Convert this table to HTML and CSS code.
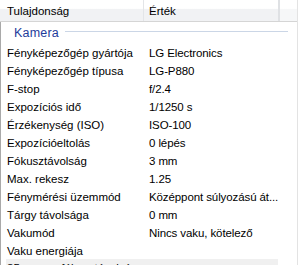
FILE: index.html
```html
<!DOCTYPE html>
<html lang="hu">
<head>
<meta charset="utf-8">
<link rel="stylesheet" href="styles.css">
</head>
<body>
<div class="panel">
  <div class="header">
    <div class="hcell hname">Tulajdonság</div>
    <div class="hcell hvalue">Érték</div>
    <div class="hcell hfill"></div>
  </div>
  <div class="body">
    <div class="group"><span class="group-title">Kamera</span><span class="group-line"></span></div>
    <div class="row"><span class="name">Fényképezőgép gyártója</span><span class="value">LG Electronics</span></div>
    <div class="row"><span class="name">Fényképezőgép típusa</span><span class="value">LG-P880</span></div>
    <div class="row"><span class="name">F-stop</span><span class="value">f/2.4</span></div>
    <div class="row"><span class="name">Expozíciós idő</span><span class="value">1/1250 s</span></div>
    <div class="row"><span class="name">Érzékenység (ISO)</span><span class="value">ISO-100</span></div>
    <div class="row"><span class="name">Expozícióeltolás</span><span class="value">0 lépés</span></div>
    <div class="row"><span class="name">Fókusztávolság</span><span class="value">3 mm</span></div>
    <div class="row"><span class="name">Max. rekesz</span><span class="value">1.25</span></div>
    <div class="row"><span class="name">Fénymérési üzemmód</span><span class="value">Középpont súlyozású át...</span></div>
    <div class="row"><span class="name">Tárgy távolsága</span><span class="value">0 mm</span></div>
    <div class="row"><span class="name">Vakumód</span><span class="value">Nincs vaku, kötelező</span></div>
    <div class="row"><span class="name">Vaku energiája</span><span class="value"></span></div>
    <div class="row hover"><span class="name">35 mm-es fókusztávolság</span><span class="value"></span></div>
  </div>
</div>
</body>
</html>
```
FILE: styles.css
```css
html, body {
  margin: 0;
  padding: 0;
  background: #ffffff;
  overflow: hidden;
}

.panel {
  width: 298px;
  height: 265px;
  font-family: "Liberation Sans", Arial, sans-serif;
  font-size: 11.5px;
  color: #000000;
  overflow: hidden;
  box-sizing: border-box;
  border-right: 1px solid #e3e3e3;
}

/* column header strip */
.header {
  display: flex;
  height: 21px;
  border-bottom: 1px solid #d5d5d5;
  background: linear-gradient(#ffffff, #ffffff 40%, #f1f2f4 45%, #f1f2f4);
}

.hcell {
  display: flex;
  align-items: center;
  box-sizing: border-box;
  white-space: nowrap;
}

.hname {
  width: 144px;
  padding-left: 7px;
  border-right: 1px solid #e3e5e8;
}

.hvalue {
  width: 136px;
  padding-left: 5px;
  border-right: 2px solid #dfe1e4;
}

.hfill {
  flex: 1;
  background: linear-gradient(#ffffff, #ffffff 40%, #f6f7f8 45%, #f6f7f8);
}

.body {
  border-left: 1px solid #a9a9a9;
  height: 243px;
}

/* group caption with a rule after it */
.group {
  display: flex;
  align-items: center;
  height: 21px;
  padding-left: 13px;
  width: 287px;
  box-sizing: border-box;
}

.group-title {
  color: #1e3c9b;
  font-size: 12.5px;
  letter-spacing: 0.2px;
}

.group-line {
  flex: 1;
  height: 1px;
  margin-left: 6px;
  margin-bottom: 2px;
  background: #cbd6e6;
}

.row {
  display: grid;
  grid-template-columns: 142px 1fr;
  height: 18px;
  align-items: center;
  width: 277px;
  box-sizing: border-box;
  white-space: nowrap;
}

.name {
  padding-left: 6px;
  padding-top: 1px;
  overflow: hidden;
}

.value {
  padding-left: 6px;
  padding-top: 1px;
  letter-spacing: -0.1px;
}

.hover {
  margin-left: 5px;
  width: 272px;
  background: #f0f0f0;
  grid-template-columns: 137px 1fr;
  align-items: start;
}

.hover .name {
  padding-left: 1px;
  padding-top: 3px;
}
```
